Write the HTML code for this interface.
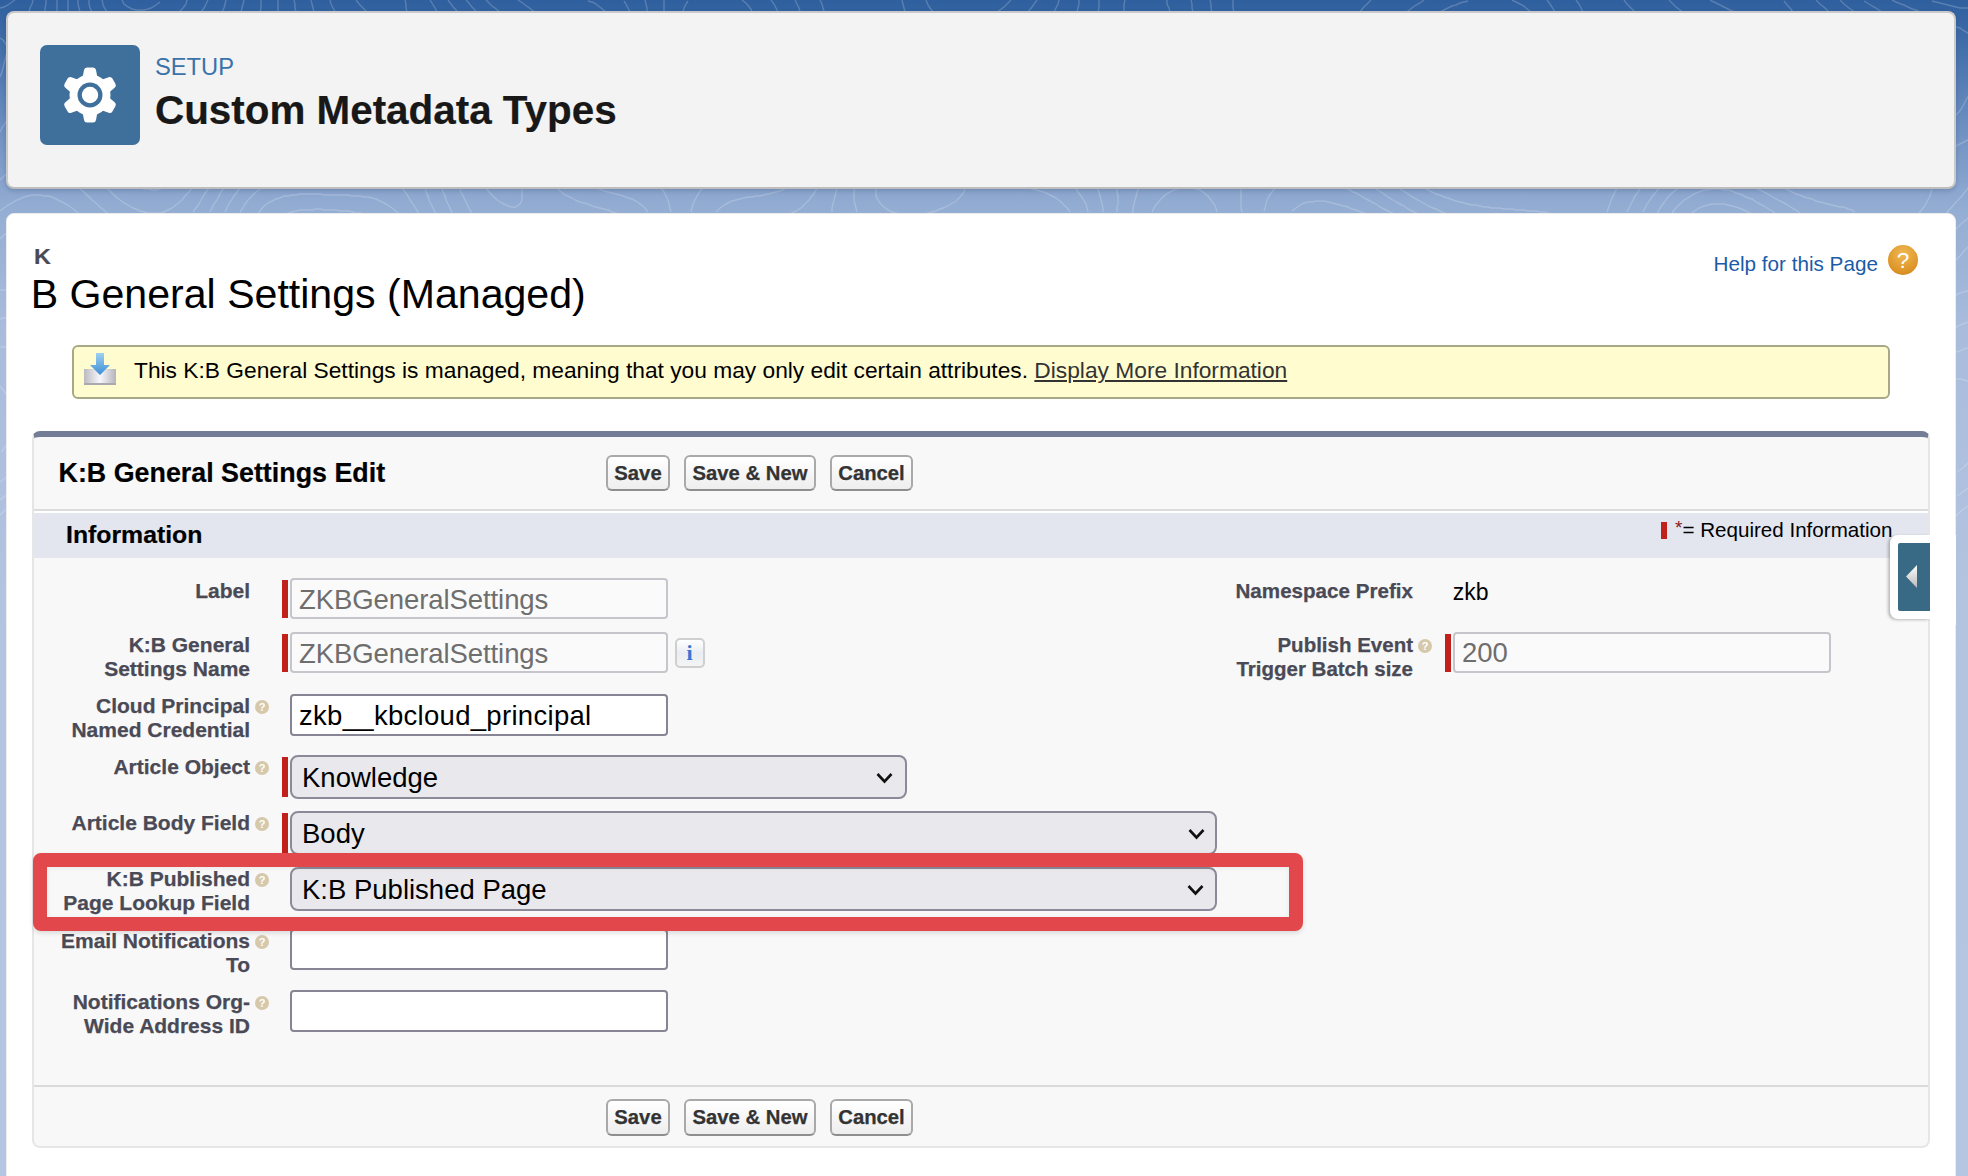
<!DOCTYPE html>
<html><head><meta charset="utf-8">
<style>
html,body{margin:0;padding:0;width:1968px;height:1176px;overflow:hidden;}
body{position:relative;font-family:"Liberation Sans",sans-serif;
 background:linear-gradient(180deg,#2f5f9e 0px,#3f6ca8 40px,#6a8dc0 120px,#8ba6cf 190px,#95aed3 213px,#a9bcdc 330px,#b3c4e0 600px,#b5c6e2 1176px);}
.abs{position:absolute;}
.t{position:absolute;white-space:nowrap;line-height:1;}
.lbl,.btn,.bs{-webkit-text-stroke:0.25px currentColor;}
#hdr{left:6px;top:11px;width:1946px;height:174px;background:#f3f3f3;border:2px solid #c9c9c9;border-bottom-color:#bdbdbd;border-radius:8px;box-shadow:0 2px 4px rgba(40,60,90,0.25);}
#icon{left:40px;top:45px;width:100px;height:100px;background:#3f6f9b;border-radius:7px;}
#panel{left:6px;top:213px;width:1948px;height:1000px;background:#fff;border:1px solid #ececec;border-radius:8px;}
#msg{left:72px;top:345px;width:1814px;height:50px;background:#fffccf;border:2px solid #a9a886;border-radius:6px;}
#form{left:32px;top:431px;width:1894px;height:709px;background:#f8f8f8;border:2px solid #e6e6e6;border-top:6px solid #737d95;border-radius:8px;}
.btn{position:absolute;height:32px;border:2px solid #a9a9a9;border-bottom-color:#8e8e8e;border-radius:6px;background:linear-gradient(#ffffff,#eeeeee);font-weight:bold;font-size:20.3px;color:#333;text-align:center;line-height:32px;box-sizing:content-box;}
.lbl{position:absolute;right:1718px;text-align:right;font-weight:bold;font-size:21px;color:#4a4a56;line-height:24px;white-space:nowrap;}
.rq{position:absolute;left:282px;width:6px;background:#c0221b;}
.inp{position:absolute;left:290px;width:374px;border:2px solid #858594;border-radius:4px;background:#fff;}
.inp.dis{border-color:#c5c5cb;background:#fafafa;}
.itx{position:absolute;font-size:27.5px;white-space:nowrap;line-height:1;}
.sel{position:absolute;left:290px;border:2px solid #8a8a98;border-radius:8px;background:#e9e8ed;}
.hlp{position:absolute;width:14px;height:14px;border-radius:50%;background:#d6c8aa;}
.hlp:after{content:"?";position:absolute;left:0;top:1px;width:14px;text-align:center;color:#fff;font-size:11px;font-weight:bold;line-height:12px;}
</style></head><body>

<svg class="abs" style="left:0;top:0" width="1968" height="1176"><path fill="none" stroke="#ffffff" stroke-opacity="0.2" stroke-width="1.4" d="M122 0 L124 4 L128 7 L132 9 L136 10 L140 10 L144 10 L148 9 L151 8 L156 5 L160 2 M932 212 L936 211 L940 209 L943 208 L948 206 L951 204 L956 201 L960 197 L964 192 L965 188 M876 188 L876 192 L876 196 L878 200 L880 203 L884 207 L888 210 L892 212 L896 213 L900 214 L904 215 L908 215 L912 215 L916 215 L920 214 L924 214 L928 213 L932 212 M102 0 L103 4 L104 7 L107 12 M179 12 L183 8 L186 4 L187 0 M1070 212 L1068 209 L1064 205 L1060 201 L1056 198 L1052 196 L1048 194 L1044 192 L1040 191 L1036 190 L1032 189 L1028 187 L1024 186 L1020 185 M855 188 L854 192 L854 196 L854 200 L855 204 L856 208 L857 212 M89 0 L89 4 L90 8 L92 12 M200 13 L204 8 L206 4 L208 0 M1125 0 L1124 4 L1124 7 L1124 12 M1170 12 L1169 8 L1167 4 L1167 0 M1088 212 L1087 208 L1086 204 L1084 201 L1081 196 L1078 192 L1076 189 L1072 186 M837 188 L836 192 L835 196 L834 200 L833 204 L832 208 L832 212 M78 0 L78 4 L79 8 L80 12 M222 12 L224 8 L225 4 L226 0 M1099 0 L1099 4 L1099 8 L1098 12 M1193 12 L1192 8 L1192 4 L1191 0 M1710 0 L1716 3 L1720 5 L1724 7 L1728 9 L1732 11 L1736 12 L1740 14 M1793 12 L1790 8 L1788 6 L1784 1 M1103 212 L1103 208 L1102 204 L1101 200 L1100 196 L1099 192 L1097 188 L1096 185 M817 188 L815 192 L812 196 L809 200 L805 204 L801 208 L796 211 L792 213 L788 215 L784 216 M1368 215 L1364 213 L1361 212 L1356 210 L1352 209 L1348 207 L1344 206 L1340 205 L1336 204 L1332 203 L1328 202 L1324 201 L1320 201 L1316 201 L1312 202 L1308 202 L1304 203 L1300 205 L1296 208 L1292 211 M368 215 L364 214 L360 213 L356 213 L353 212 L348 211 L344 211 L340 211 L336 210 L332 210 L328 210 L324 210 L320 209 L316 209 L312 210 L308 210 L304 210 L300 210 L296 211 L292 212 L288 213 L284 215 M68 0 L68 4 L68 8 L68 12 M241 12 L242 8 L243 4 L244 0 M1079 0 L1079 4 L1078 8 L1077 12 M1212 12 L1211 8 L1211 4 L1210 0 M1669 0 L1672 3 L1676 7 L1680 10 L1683 12 M1829 12 L1825 8 L1820 4 L1816 0 M1117 212 L1117 208 L1118 204 L1118 200 L1118 196 L1117 192 L1117 188 M792 185 L788 187 L784 189 L780 191 L776 192 L772 193 L768 194 L764 195 L760 196 L756 196 L752 197 L748 197 L744 198 L740 199 L736 200 L732 201 L728 203 L724 205 L720 208 L716 212 M1396 215 L1392 213 L1388 211 L1384 209 L1380 207 L1376 204 L1372 202 L1368 200 L1364 198 L1361 196 L1356 193 L1353 192 L1348 189 L1345 188 L1340 185 M1280 184 L1276 187 L1272 192 L1269 196 L1267 200 L1266 204 L1265 208 L1264 211 M400 215 L397 212 L392 208 L388 205 L384 203 L380 201 L376 199 L372 198 L368 197 L364 197 L360 196 L356 196 L352 196 L348 195 L344 195 L340 195 L336 195 L332 195 L328 195 L324 195 L320 194 L316 194 L312 194 L308 194 L304 194 L300 194 L296 195 L292 195 L288 196 L284 196 L280 198 L276 199 L272 201 L268 203 L264 206 L260 211 L256 216 M57 0 L57 4 L57 8 L57 12 M260 12 L261 8 L261 4 L261 0 M518 0 L524 4 L528 7 L532 10 L535 12 M606 12 L601 8 L596 4 L592 2 L588 1 M1059 0 L1058 4 L1056 8 L1054 12 M708 185 L704 187 L700 191 L697 196 L695 200 L693 204 L692 208 L691 212 M1132 216 L1133 212 L1133 208 L1134 204 L1135 200 L1136 197 L1137 192 L1139 188 M1234 12 L1233 8 L1233 4 L1233 0 M1624 0 L1627 4 L1631 8 L1635 12 M1856 13 L1852 10 L1849 8 L1844 4 L1840 0 M1420 215 L1416 213 L1412 211 L1408 209 L1404 206 L1400 204 L1396 202 L1393 200 L1388 197 L1384 194 L1381 192 L1376 189 L1372 186 M1241 188 L1241 192 L1241 196 L1241 200 L1241 204 L1241 208 L1242 212 M420 216 L418 212 L416 209 L413 204 L410 200 L408 196 L405 192 L402 188 L400 185 M268 185 L264 187 L260 189 L256 192 L252 196 L248 200 L245 204 L243 208 L240 212 M46 0 L46 4 L45 8 L45 12 M278 12 L278 8 L278 4 L278 0 M486 0 L488 2 L492 6 L495 8 L500 12 M660 187 L664 192 L666 196 L668 200 L669 204 L670 208 L671 212 M1152 212 L1154 208 L1156 205 L1160 200 L1164 196 L1168 193 L1172 191 L1176 189 L1180 188 L1184 188 L1188 187 L1192 188 L1196 189 L1200 190 L1203 192 L1208 196 L1211 200 L1214 204 L1216 208 L1217 212 M1448 214 L1444 213 L1440 211 L1436 209 L1433 208 L1428 206 L1425 204 L1420 201 L1416 199 L1412 197 L1408 194 L1405 192 L1400 189 L1396 186 M1360 12 L1363 8 L1367 4 L1371 0 M820 0 L822 4 L823 8 L824 11 M630 12 L628 8 L626 4 L624 1 M1037 0 L1034 4 L1032 7 L1028 12 M905 12 L904 8 L903 4 L902 0 M1576 0 L1579 4 L1581 8 L1583 12 M1952 72 L1952 68 L1952 64 M1884 13 L1880 11 L1876 8 L1872 6 L1869 4 L1864 1 M436 214 L433 208 L431 204 L429 200 L428 196 L426 192 L425 188 L424 185 M240 188 L237 192 L234 196 L232 199 L229 204 L227 208 L225 212 M8 232 L4 235 L0 239 M1972 243 L1968 247 L1964 251 L1960 256 L1956 260 M1954 296 L1960 293 L1963 292 L1968 291 L1972 290 M0 290 L4 290 L8 290 M9 508 L4 511 L0 515 M33 0 L32 4 L30 8 L29 12 M224 188 L221 192 L219 196 L217 200 L214 204 L212 208 L210 212 M80 214 L77 212 L72 208 L68 205 L64 203 L60 201 L56 199 L52 197 L48 196 L44 196 L40 195 L36 195 L32 195 L28 196 L24 197 L20 199 L17 200 L12 203 L8 205 L4 208 L0 211 M466 0 L468 2 L472 7 L476 11 M588 185 L592 187 L595 188 L600 189 L604 191 L608 192 L612 193 L616 194 L620 195 L623 196 L628 198 L632 199 L636 201 L640 204 L644 207 L648 212 M452 213 L450 208 L448 204 L446 200 L445 196 L443 192 L442 188 M296 12 L295 8 L295 4 L294 0 M795 0 L797 4 L799 8 L800 12 M647 12 L647 8 L646 4 L645 0 M1011 0 L1008 3 L1004 7 L1000 10 L997 12 M933 12 L930 8 L928 5 L926 0 M1556 215 L1552 214 L1548 213 L1544 212 L1540 212 L1536 211 L1532 211 L1528 211 L1524 210 L1520 210 L1516 210 L1512 209 L1508 209 L1504 209 L1500 208 L1496 208 L1492 208 L1488 207 L1484 207 L1480 206 L1476 205 L1472 205 L1468 204 L1464 203 L1460 202 L1456 201 L1453 200 L1448 198 L1444 197 L1440 195 L1436 194 L1432 192 L1428 190 L1425 188 L1420 185 M1404 14 L1408 11 L1412 8 L1416 5 L1420 3 L1424 0 M1547 0 L1550 4 L1552 7 L1555 12 M1955 116 L1959 112 L1962 108 L1964 104 L1966 100 L1968 97 L1970 92 L1972 88 M1972 35 L1968 33 L1964 31 L1960 28 L1956 27 M1924 13 L1920 12 L1916 10 L1912 9 L1908 7 L1904 5 L1901 4 L1896 2 L1892 0 M0 77 L2 72 L3 68 L4 64 L5 60 L6 56 L7 52 L7 48 L6 44 L3 40 L0 38 M1972 214 L1968 218 L1966 220 L1961 224 L1957 228 L1953 232 M1955 328 L1960 325 L1963 324 L1968 322 L1972 320 M0 319 L4 318 L8 318 M8 494 L5 496 L0 500 M1972 503 L1968 506 L1965 508 L1960 512 L1956 516 M15 0 L12 2 L8 5 L4 7 L0 8 M448 0 L451 4 L454 8 L458 12 M556 187 L560 191 L564 194 L567 196 L572 198 L575 200 L580 202 L584 203 L588 204 L592 206 L596 207 L600 208 L604 209 L608 210 L612 212 L616 213 L620 215 M472 213 L469 208 L467 204 L465 200 L463 196 L461 192 L460 188 M314 12 L313 8 L312 4 L311 0 M771 0 L774 4 L776 8 L778 12 M664 12 L664 8 L664 4 L664 0 M1512 0 L1516 2 L1520 4 L1524 6 L1526 8 L1531 12 M1532 184 L1528 185 L1524 186 L1520 186 L1516 187 L1512 187 L1508 187 L1504 188 L1500 188 L1496 188 L1492 188 L1488 188 L1484 188 L1480 187 L1476 187 L1472 187 L1468 186 L1464 185 L1460 184 M1440 12 L1444 10 L1448 8 L1452 6 L1456 5 L1460 3 L1464 2 L1468 1 M1972 8 L1968 8 L1964 8 L1960 8 L1956 7 L1952 6 L1948 5 L1944 4 L1940 3 L1936 2 L1932 1 M0 132 L2 128 L4 125 L7 120 L9 116 M209 188 L206 192 L204 195 L201 200 L199 204 L196 208 L193 212 M108 214 L104 210 L101 208 L97 204 L92 200 L88 196 L84 192 L80 189 L76 186 M8 173 L4 176 L0 180 M1607 212 L1608 209 L1610 204 L1611 200 L1613 196 L1615 192 L1617 188 L1620 185 M1956 146 L1960 144 L1964 142 L1968 140 L1972 136 M1972 184 L1968 188 L1965 192 L1962 196 L1958 200 L1956 202 L1952 207 L1948 211 L1944 216 M1956 352 L1960 351 L1964 349 L1968 348 L1972 347 M0 347 L4 347 L8 347 M8 476 L4 479 L0 482 M1972 485 L1968 488 L1964 491 L1960 494 L1957 496 M430 0 L432 3 L435 8 L437 12 M522 188 L522 192 L522 196 L522 200 L520 204 L516 207 L512 207 L508 206 L504 204 L500 202 L497 200 L493 196 L489 192 L486 188 L484 185 M336 13 L333 8 L331 4 L330 0 M742 0 L747 4 L750 8 L752 11 M683 12 L684 8 L686 4 L688 1 M160 213 L156 213 L152 213 L148 213 L144 212 L140 211 L136 209 L133 208 L128 205 L124 203 L120 200 L116 197 L112 193 L108 189 L104 185 M192 188 L189 192 L185 196 L182 200 L177 204 L172 208 L168 210 L164 212 L160 213 M1972 459 L1968 463 L1964 467 L1960 470 L1957 472 M1627 212 L1629 208 L1631 204 L1633 200 L1635 196 L1638 192 L1640 189 L1644 184 M1932 188 L1931 192 L1930 196 L1928 200 L1926 204 L1924 207 L1920 212 L1916 216 M1956 379 L1960 379 L1964 380 L1968 381 L1972 383 M0 386 L4 391 L7 396 L9 400 M9 440 L7 444 L4 448 L2 452 M405 0 L406 4 L406 8 L407 12 M368 13 L364 9 L360 5 L356 0 M160 189 L156 190 L152 190 L148 189 L144 189 L140 187 L136 185 M168 185 L164 187 L160 189 M1643 212 L1645 208 L1647 204 L1650 200 L1652 197 L1656 192 L1659 188 M1776 184 L1780 186 L1784 188 L1788 190 L1792 192 L1796 194 L1800 195 L1804 197 L1808 198 L1812 199 L1816 201 L1820 202 L1824 203 L1828 204 L1832 205 L1836 206 L1840 207 L1844 207 L1848 209 L1852 210 L1855 212 M1656 215 L1658 212 L1660 208 L1663 204 L1666 200 L1668 197 L1672 193 L1676 190 L1680 187 L1684 184 M1752 186 L1756 188 L1760 190 L1764 192 L1768 194 L1771 196 L1776 199 L1780 201 L1784 203 L1788 205 L1792 208 L1796 210 L1800 213 M1672 213 L1676 208 L1680 204 L1684 200 L1688 198 L1692 195 L1696 193 L1699 192 L1704 190 L1708 190 L1712 189 L1716 189 L1720 189 L1724 190 L1728 190 L1732 191 L1736 193 L1740 194 L1744 196 L1748 198 L1752 199 L1756 202 L1760 204 L1764 206 L1767 208 L1772 211 L1776 214 M1692 213 L1696 210 L1699 208 L1704 206 L1708 205 L1712 204 L1716 204 L1720 204 L1724 204 L1728 205 L1732 206 L1736 207 L1739 208 L1744 210 L1748 212 L1752 214"/></svg>
<div id="hdr" class="abs"></div>
<div id="icon" class="abs">
 <svg width="100" height="100" viewBox="0 0 100 100" style="position:absolute;left:0;top:0">
  <g transform="translate(50,50)" fill="#fff"><circle r="20.5"/><path d="M-7.5,-17 L-6,-25 Q-5.6,-27.6 -3,-27.6 L3,-27.6 Q5.6,-27.6 6,-25 L7.5,-17 Z" transform="rotate(0)"/><path d="M-7.5,-17 L-6,-25 Q-5.6,-27.6 -3,-27.6 L3,-27.6 Q5.6,-27.6 6,-25 L7.5,-17 Z" transform="rotate(60)"/><path d="M-7.5,-17 L-6,-25 Q-5.6,-27.6 -3,-27.6 L3,-27.6 Q5.6,-27.6 6,-25 L7.5,-17 Z" transform="rotate(120)"/><path d="M-7.5,-17 L-6,-25 Q-5.6,-27.6 -3,-27.6 L3,-27.6 Q5.6,-27.6 6,-25 L7.5,-17 Z" transform="rotate(180)"/><path d="M-7.5,-17 L-6,-25 Q-5.6,-27.6 -3,-27.6 L3,-27.6 Q5.6,-27.6 6,-25 L7.5,-17 Z" transform="rotate(240)"/><path d="M-7.5,-17 L-6,-25 Q-5.6,-27.6 -3,-27.6 L3,-27.6 Q5.6,-27.6 6,-25 L7.5,-17 Z" transform="rotate(300)"/><circle r="12.5" fill="#3f6f9b"/><circle r="8.2" fill="#fff"/></g>
 </svg>
</div>
<div class="t" style="left:155px;top:56px;font-size:23.7px;color:#3a72aa;">SETUP</div>
<div class="t" style="left:155px;top:90px;font-size:40.4px;font-weight:bold;-webkit-text-stroke:0.2px currentColor;color:#181818;">Custom Metadata Types</div>

<div id="panel" class="abs"></div>
<div class="t" style="left:34px;top:246px;font-size:22px;font-weight:bold;-webkit-text-stroke:0.2px currentColor;color:#4a4a56;transform:scaleX(1.06);transform-origin:0 0;">K</div>
<div class="t" style="left:30.7px;top:274px;font-size:41.1px;color:#000;">B General Settings (Managed)</div>
<div class="t" style="left:1713.5px;top:254px;font-size:20.7px;color:#1b5ba8;">Help for this Page</div>
<div class="abs" style="left:1888px;top:245px;width:30px;height:30px;border-radius:50%;background:radial-gradient(circle at 50% 30%,#f0b955,#dc9326 70%,#c07a17);"></div>
<div class="t" style="left:1888px;top:250px;width:30px;text-align:center;font-size:22.5px;color:#fff;">?</div>

<div id="msg" class="abs"></div>
<svg class="abs" style="left:82px;top:351px" width="36" height="36">
 <defs>
  <linearGradient id="tray" x1="0" x2="1" y1="0" y2="0"><stop offset="0" stop-color="#b9b9c0"/><stop offset="0.5" stop-color="#f7f7fb"/><stop offset="1" stop-color="#b4b4bb"/></linearGradient>
  <linearGradient id="arr" x1="0" x2="0" y1="0" y2="1"><stop offset="0" stop-color="#9fd0f0"/><stop offset="1" stop-color="#3d8fd6"/></linearGradient>
 </defs>
 <rect x="2" y="18" width="32" height="16" fill="url(#tray)"/>
 <rect x="2" y="32" width="32" height="2" fill="#a9a9b2"/>
 <polygon points="14,2 22,2 22,14 28,14 18,24 8,14 14,14" fill="url(#arr)"/>
</svg>
<div class="t" style="left:134px;top:359px;font-size:22.75px;color:#000;">This K:B General Settings is managed, meaning that you may only edit certain attributes. <span style="color:#333;text-decoration:underline;text-decoration-thickness:1.5px;text-underline-offset:2px;">Display More Information</span></div>

<div id="form" class="abs"></div>
<div class="t" style="left:58.5px;top:460px;font-size:26.85px;font-weight:bold;-webkit-text-stroke:0.2px currentColor;color:#000;">K:B General Settings Edit</div>
<div class="btn" style="left:606px;top:455px;width:60px;">Save</div>
<div class="btn" style="left:684px;top:455px;width:128px;">Save &amp; New</div>
<div class="btn" style="left:830px;top:455px;width:79px;">Cancel</div>

<div class="abs" style="left:34px;top:509px;width:1894px;height:2px;background:#dcdcdc;"></div>
<div class="abs" style="left:34px;top:511px;width:1894px;height:2px;background:#fff;"></div>
<div class="abs" style="left:34px;top:513px;width:1894px;height:45px;background:#e3e6ef;"></div>
<div class="t" style="left:66px;top:523px;font-size:24.8px;font-weight:bold;-webkit-text-stroke:0.2px currentColor;color:#000;">Information</div>
<div class="abs" style="left:1661px;top:522px;width:6px;height:17px;background:#c0221b;"></div>
<div class="t" style="left:1675px;top:518px;font-size:20.6px;color:#000;"><span style="color:#8b1a1a;font-size:19px;vertical-align:3px;">*</span>= Required Information</div>

<!-- rows left -->
<div class="lbl" style="top:579px;">Label</div>
<div class="rq" style="top:580px;height:38px;"></div>
<div class="inp dis" style="top:578px;height:37px;"></div>
<div class="itx" style="left:299px;top:586px;color:#6e6e6e;letter-spacing:-0.08px;">ZKBGeneralSettings</div>

<div class="lbl" style="top:633px;">K:B General<br>Settings Name</div>
<div class="rq" style="top:634px;height:38px;"></div>
<div class="inp dis" style="top:632px;height:37px;"></div>
<div class="itx" style="left:299px;top:640px;color:#6e6e6e;letter-spacing:-0.08px;">ZKBGeneralSettings</div>
<div class="abs" style="left:675px;top:638px;width:26px;height:26px;border:2px solid #cfcfcf;border-radius:5px;background:linear-gradient(#ffffff,#e9edf2 50%,#f4f4f4);"></div>
<div class="t" style="left:677px;top:642px;width:25px;text-align:center;font-family:'Liberation Serif',serif;font-weight:bold;font-size:22px;color:#3a74cf;">i</div>

<div class="lbl" style="top:694px;">Cloud Principal<br>Named Credential</div>
<div class="hlp" style="left:255px;top:700px;"></div>
<div class="inp" style="top:694px;height:38px;"></div>
<div class="itx" style="left:299px;top:702px;color:#000;letter-spacing:0.3px;">zkb__kbcloud_principal</div>

<div class="lbl" style="top:755px;">Article Object</div>
<div class="hlp" style="left:255px;top:761px;"></div>
<div class="rq" style="top:757px;height:40px;"></div>
<div class="sel" style="top:755px;width:613px;height:40px;"></div>
<div class="itx" style="left:302px;top:764px;color:#000;">Knowledge</div>
<svg class="abs" style="left:876px;top:772px" width="17" height="13"><polyline points="1.5,2 8.5,9.5 15.5,2" fill="none" stroke="#111" stroke-width="2.6"/></svg>

<div class="lbl" style="top:811px;">Article Body Field</div>
<div class="hlp" style="left:255px;top:817px;"></div>
<div class="rq" style="top:813px;height:40px;"></div>
<div class="sel" style="top:811px;width:923px;height:40px;"></div>
<div class="itx" style="left:302px;top:820px;color:#000;">Body</div>
<svg class="abs" style="left:1188px;top:828px" width="17" height="13"><polyline points="1.5,2 8.5,9.5 15.5,2" fill="none" stroke="#111" stroke-width="2.6"/></svg>

<div class="lbl" style="top:867px;">K:B Published<br>Page Lookup Field</div>
<div class="hlp" style="left:255px;top:873px;"></div>
<div class="sel" style="top:867px;width:923px;height:40px;"></div>
<div class="itx" style="left:302px;top:876px;color:#000;">K:B Published Page</div>
<svg class="abs" style="left:1187px;top:884px" width="17" height="13"><polyline points="1.5,2 8.5,9.5 15.5,2" fill="none" stroke="#111" stroke-width="2.6"/></svg>

<div class="lbl" style="top:929px;">Email Notifications<br>To</div>
<div class="hlp" style="left:255px;top:935px;"></div>
<div class="inp" style="top:929px;height:37px;"></div>

<div class="lbl" style="top:990px;">Notifications Org-<br>Wide Address ID</div>
<div class="hlp" style="left:255px;top:996px;"></div>
<div class="inp" style="top:990px;height:38px;"></div>

<!-- rows right -->
<div class="t" style="left:1235.5px;top:581px;font-size:20.6px;font-weight:bold;-webkit-text-stroke:0.25px currentColor;color:#4a4a56;">Namespace Prefix</div>
<div class="t" style="left:1452.7px;top:581px;font-size:23px;color:#000;">zkb</div>
<div class="lbl" style="right:555px;top:633px;font-size:20.5px;">Publish Event<br>Trigger Batch size</div>
<div class="hlp" style="left:1418px;top:639px;"></div>
<div class="rq" style="left:1445px;top:634px;height:38px;"></div>
<div class="inp dis" style="left:1453px;top:632px;height:37px;"></div>
<div class="itx" style="left:1462px;top:639px;color:#6e6e6e;">200</div>

<!-- highlight box -->
<div class="abs" style="left:33px;top:853px;width:1242px;height:50px;border:14px solid #e2474b;border-radius:8px;box-shadow:0 2px 5px rgba(0,0,0,0.13), inset 0 1px 5px rgba(0,0,0,0.07);"></div>

<!-- bottom -->
<div class="abs" style="left:34px;top:1085px;width:1894px;height:2px;background:#dadada;"></div>
<div class="btn" style="left:606px;top:1099px;width:60px;height:33px;">Save</div>
<div class="btn" style="left:684px;top:1099px;width:128px;height:33px;">Save &amp; New</div>
<div class="btn" style="left:830px;top:1099px;width:79px;height:33px;">Cancel</div>

<!-- side tab -->
<div class="abs" style="left:1890px;top:535px;width:40px;height:84px;background:#fff;border-radius:8px 0 0 8px;box-shadow:-2px 1px 3px rgba(0,0,0,0.25);"></div>
<div class="abs" style="left:1898px;top:543px;width:32px;height:68px;background:#386985;border-radius:2px 0 0 2px;"></div>
<svg class="abs" style="left:1898px;top:543px" width="32" height="68"><defs><linearGradient id="tri" x1="0" x2="0" y1="0" y2="1"><stop offset="0" stop-color="#ffffff"/><stop offset="1" stop-color="#b9b9b9"/></linearGradient></defs><polygon points="8,33.5 19,22 19,45" fill="url(#tri)"/></svg>
<div class="abs" style="left:1930px;top:535px;width:26px;height:90px;background:#fff;"></div>

</body></html>
